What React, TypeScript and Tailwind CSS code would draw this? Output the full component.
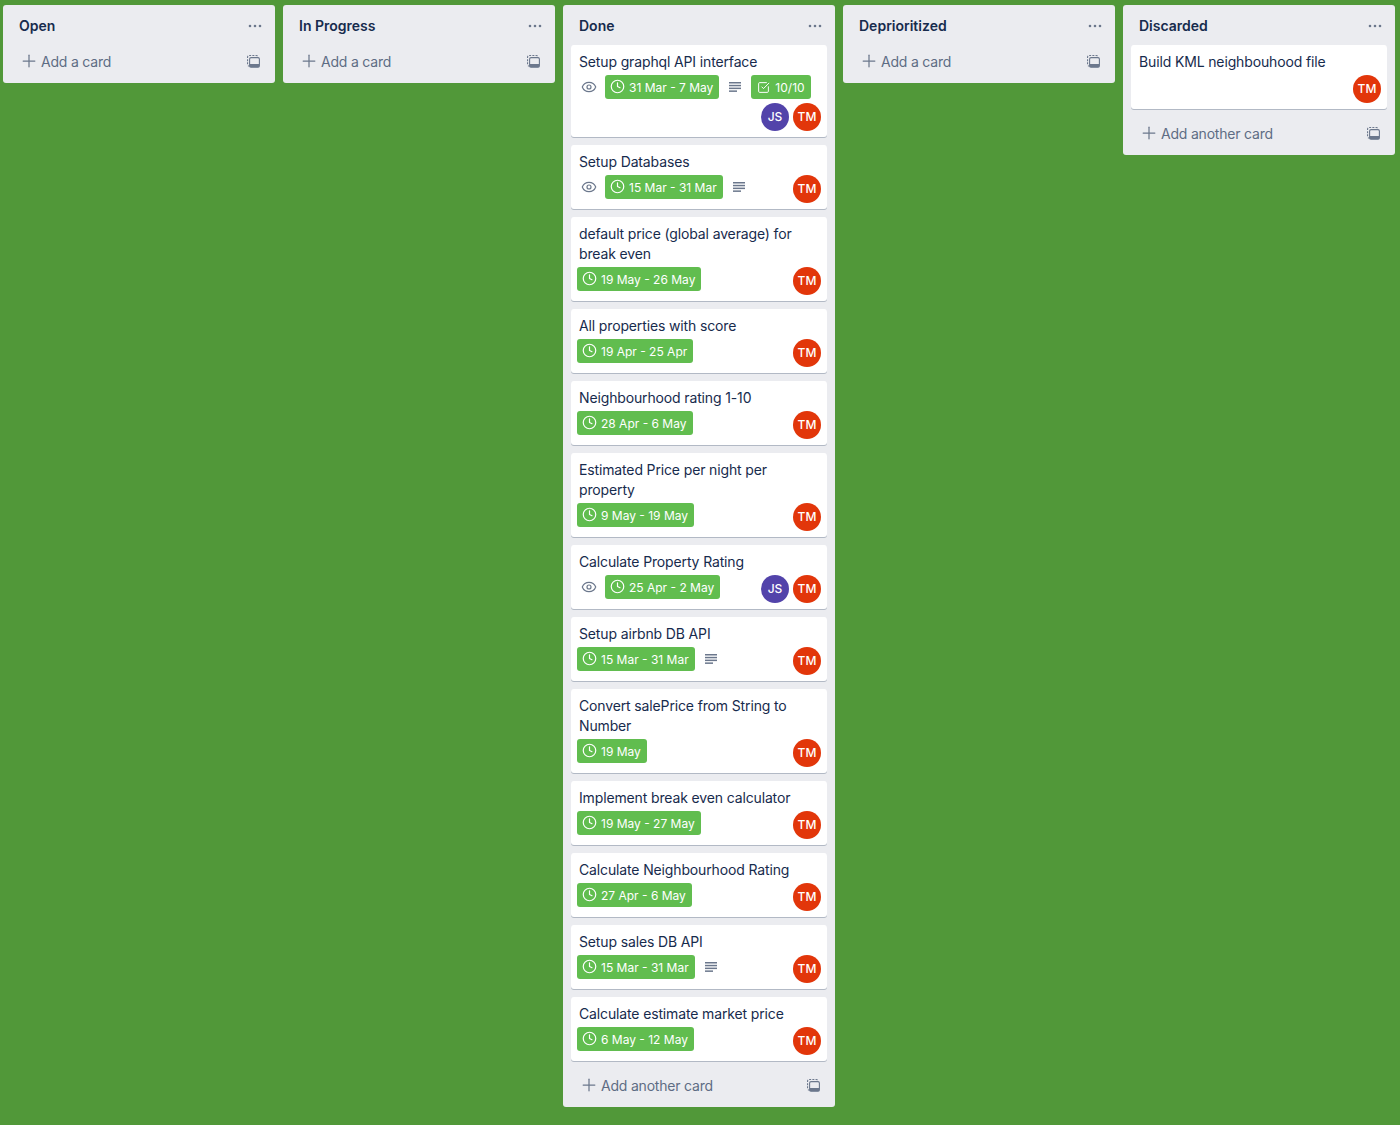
import { Clock, Eye, Plus, SquareCheckBig } from "lucide-react";

type CardData = {
  title: string;
  date?: string;
  eye?: boolean;
  lines?: boolean;
  check?: string;
  js?: boolean;
};

const done: CardData[] = [
  { title: "Setup graphql API interface", date: "31 Mar - 7 May", eye: true, lines: true, check: "10/10", js: true },
  { title: "Setup Databases", date: "15 Mar - 31 Mar", eye: true, lines: true },
  { title: "default price (global average) for break even", date: "19 May - 26 May" },
  { title: "All properties with score", date: "19 Apr - 25 Apr" },
  { title: "Neighbourhood rating 1-10", date: "28 Apr - 6 May" },
  { title: "Estimated Price per night per property", date: "9 May - 19 May" },
  { title: "Calculate Property Rating", date: "25 Apr - 2 May", eye: true, js: true },
  { title: "Setup airbnb DB API", date: "15 Mar - 31 Mar", lines: true },
  { title: "Convert salePrice from String to Number", date: "19 May" },
  { title: "Implement break even calculator", date: "19 May - 27 May" },
  { title: "Calculate Neighbourhood Rating", date: "27 Apr - 6 May" },
  { title: "Setup sales DB API", date: "15 Mar - 31 Mar", lines: true },
  { title: "Calculate estimate market price", date: "6 May - 12 May" },
];

function Dots() {
  return (
    <svg width="14" height="4" viewBox="0 0 14 4" className="text-[#6b778c]" fill="currentColor">
      <circle cx="2" cy="2" r="1.3" />
      <circle cx="7" cy="2" r="1.3" />
      <circle cx="12" cy="2" r="1.3" />
    </svg>
  );
}

function TemplateIcon() {
  return (
    <svg width="13" height="13" viewBox="0 0 13 13" fill="none" className="text-[#6b778c]">
      <rect x="0.55" y="0.55" width="10.5" height="10.5" rx="1.6" stroke="currentColor" strokeWidth="1.1" strokeDasharray="2 1.2" />
      <rect x="2.6" y="2.6" width="9.8" height="9.6" rx="1.5" fill="#ebecf0" stroke="currentColor" strokeWidth="1.1" />
      <rect x="2.8" y="9" width="9.4" height="3.2" fill="currentColor" />
    </svg>
  );
}

function LinesIcon() {
  return (
    <svg width="12" height="10" viewBox="0 0 12 10" fill="#6b778c">
      <rect x="0" y="0" width="12" height="1.5" />
      <rect x="0" y="2.8" width="12" height="1.5" />
      <rect x="0" y="5.6" width="12" height="1.5" />
      <rect x="0" y="8.4" width="8" height="1.5" />
    </svg>
  );
}

function Avatar({ label, color }: { label: string; color: string }) {
  return (
    <div className={`w-7 h-7 rounded-full flex items-center justify-center text-white text-[12px] font-medium ${color}`}>
      {label}
    </div>
  );
}

function Card({ card }: { card: CardData }) {
  return (
    <div className="bg-white rounded-[3px] shadow-[0_1px_0_#091e4240] pt-[7px] pr-[6px] pb-[6px] pl-[6px]">
      <div className="px-[2px] text-[14px] leading-[20px] text-[#172b4d] mb-[3px] tracking-[-0.14px]">{card.title}</div>
      <div className="flex flex-wrap gap-y-1">
        {card.eye && (
          <div className="w-6 h-6 mr-1 flex items-center justify-center">
            <Eye size={16} strokeWidth={1.8} className="text-[#6b778c]" />
          </div>
        )}
        {card.date && (
          <div className="h-6 mr-1 pl-[5px] pr-[6px] pt-[1px] rounded-[3px] bg-[#61bd4f] text-white text-[12px] flex items-center">
            <Clock size={15} strokeWidth={1.9} className="mr-1 -mt-[2px]" />
            {card.date}
          </div>
        )}
        {card.lines && (
          <div className="w-6 h-6 mr-1 flex items-center justify-center">
            <LinesIcon />
          </div>
        )}
        {card.check && (
          <div className="h-6 mr-1 px-[6px] pt-[1px] rounded-[3px] bg-[#61bd4f] text-white text-[12px] flex items-center">
            <SquareCheckBig size={13} strokeWidth={1.8} className="mr-[5px] -mt-[1px]" />
            {card.check}
          </div>
        )}
        <div className="ml-auto flex gap-1">
          {card.js && <Avatar label="JS" color="bg-[#5243aa]" />}
          <Avatar label="TM" color="bg-[#e2360a]" />
        </div>
      </div>
    </div>
  );
}

function List({ title, cards, add }: { title: string; cards?: CardData[]; add: string }) {
  return (
    <div className="w-[272px] shrink-0 bg-[#ebecf0] rounded-[3px] self-start">
      <div className="h-10 pl-4 pr-[13px] pt-[2px] flex items-center justify-between">
        <div className="text-[14px] leading-[20px] font-semibold text-[#172b4d]">{title}</div>
        <Dots />
      </div>
      {cards && (
        <div className="px-2 mb-2 flex flex-col gap-2">
          {cards.map((c) => (
            <Card key={c.title} card={c} />
          ))}
        </div>
      )}
      <div className="h-[38px] pl-4 pr-[15px] pt-[2px] pb-[8px] flex items-center justify-between">
        <div className="flex items-center text-[14px] text-[#5e6c84] tracking-[-0.2px]">
          <Plus size={20} strokeWidth={1.5} className="text-[#6b778c] mr-[2px]" />
          <span>{add}</span>
        </div>
        <TemplateIcon />
      </div>
    </div>
  );
}

export default function App() {
  return (
    <div className="w-[1400px] h-[1125px] bg-[#519839] overflow-hidden font-['Inter',sans-serif] pt-[5px] pl-[3px] flex gap-2">
      <List title="Open" add="Add a card" />
      <List title="In Progress" add="Add a card" />
      <List title="Done" cards={done} add="Add another card" />
      <List title="Deprioritized" add="Add a card" />
      <List title="Discarded" cards={[{ title: "Build KML neighbouhood file" }]} add="Add another card" />
    </div>
  );
}
